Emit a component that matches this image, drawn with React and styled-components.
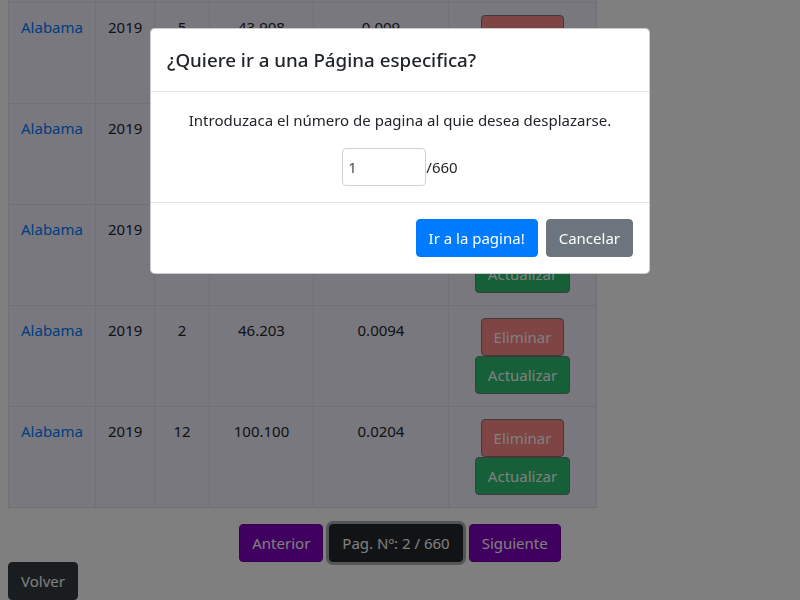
import React from 'react'
import styled, { createGlobalStyle } from 'styled-components'

const dark = '#212529'
const borderGray = '#dee2e6'

const GlobalStyle = createGlobalStyle`
  html, body {
    margin: 0;
    background: #fff;
    overflow: hidden;
  }
  body {
    font-family: 'Noto Sans', 'Open Sans', sans-serif;
    font-size: 15px;
    line-height: 24px;
    color: ${dark};
  }
  * {
    box-sizing: border-box;
  }
`

const Page = styled.div`
  padding: 0 8px;
  height: 600px;
  overflow: hidden;
`

const Table = styled.table`
  border-collapse: collapse;
  table-layout: fixed;
  width: 588px;
  margin-top: -99px;
  margin-bottom: 16px;
  background: #f4f0ff;
`

const Cell = styled.td`
  border: 1px solid ${borderGray};
  padding: 12px;
  text-align: center;
  vertical-align: top;
`

const StateLink = styled.a`
  color: #007bff;
  text-decoration: none;
`

const Btn = styled.button`
  display: inline-block;
  font-family: inherit;
  font-size: 15px;
  line-height: 24px;
  padding: 6px 12px;
  border-radius: 4px;
  border: 1px solid ${p => p.$border || p.$bg};
  background: ${p => p.$bg};
  color: #fff;
  cursor: pointer;
  box-shadow: ${p => (p.$focus ? '0 0 0 3px rgba(82, 88, 93, 0.5)' : 'none')};
`

const Actions = styled.div`
  display: flex;
  flex-direction: column;
  align-items: center;
`

const Pager = styled.div`
  display: flex;
  justify-content: center;
  gap: 6px;
`

const Overlay = styled.div`
  position: fixed;
  inset: 0;
  background: rgba(0, 0, 0, 0.5);
  display: flex;
  justify-content: center;
  align-items: flex-start;
  padding-top: 28px;
`

const Dialog = styled.div`
  width: 500px;
  background: #fff;
  border: 1px solid rgba(0, 0, 0, 0.2);
  border-radius: 4.8px;
`

const Header = styled.div`
  padding: 16px;
  border-bottom: 1px solid ${borderGray};
`

const Title = styled.h5`
  margin: 0;
  font-size: 18.75px;
  font-weight: 500;
  line-height: 30px;
`

const Body = styled.div`
  padding: 16px;
  text-align: center;
`

const Hint = styled.p`
  margin: 0 0 16px;
`

const PageInput = styled.input`
  width: 84px;
  height: 38px;
  padding: 6px 5px;
  font-family: inherit;
  font-size: 15px;
  color: #495057;
  border: 1px solid #ced4da;
  border-radius: 4px;
  vertical-align: middle;
`

const Total = styled.span`
  vertical-align: middle;
`

const Footer = styled.div`
  display: flex;
  justify-content: flex-end;
  gap: 8px;
  padding: 16px;
  border-top: 1px solid ${borderGray};
`

const rows = [
  ['2019', '7', '40.511', '0.0083'],
  ['2019', '5', '43.908', '0.009'],
  ['2019', '9', '51.320', '0.0105'],
  ['2019', '3', '38.117', '0.0078'],
  ['2019', '2', '46.203', '0.0094'],
  ['2019', '12', '100.100', '0.0204'],
]

const App = () => (
  <>
    <GlobalStyle />
    <Page>
      <Table>
        <colgroup>
          <col style={{ width: 87 }} />
          <col style={{ width: 59 }} />
          <col style={{ width: 55 }} />
          <col style={{ width: 104 }} />
          <col style={{ width: 135 }} />
          <col style={{ width: 148 }} />
        </colgroup>
        <tbody>
          {rows.map((r, i) => (
            <tr key={i}>
              <Cell>
                <StateLink href="#">Alabama</StateLink>
              </Cell>
              <Cell>{r[0]}</Cell>
              <Cell>{r[1]}</Cell>
              <Cell>{r[2]}</Cell>
              <Cell>{r[3]}</Cell>
              <Cell>
                <Actions>
                  <Btn $bg="#ff8888" $border="#787878">Eliminar</Btn>
                  <Btn $bg="#2cbe70" $border="#787878">Actualizar</Btn>
                </Actions>
              </Cell>
            </tr>
          ))}
        </tbody>
      </Table>
      <Pager>
        <Btn $bg="#8000c0" $border="#70009e">Anterior</Btn>
        <Btn $bg="#23272b" $border="#1d2124" $focus>
          Pag. Nº: 2 / 660
        </Btn>
        <Btn $bg="#8000c0" $border="#70009e">Siguiente</Btn>
      </Pager>
      <div>
        <Btn $bg="#343a40">Volver</Btn>
      </div>
    </Page>
    <Overlay>
      <Dialog>
        <Header>
          <Title>¿Quiere ir a una Página especifica?</Title>
        </Header>
        <Body>
          <Hint>Introduzaca el número de pagina al quie desea desplazarse.</Hint>
          <div>
            <PageInput defaultValue="1" />
            <Total>/660</Total>
          </div>
        </Body>
        <Footer>
          <Btn $bg="#007bff">Ir a la pagina!</Btn>
          <Btn $bg="#6c757d">Cancelar</Btn>
        </Footer>
      </Dialog>
    </Overlay>
  </>
)

export default App
